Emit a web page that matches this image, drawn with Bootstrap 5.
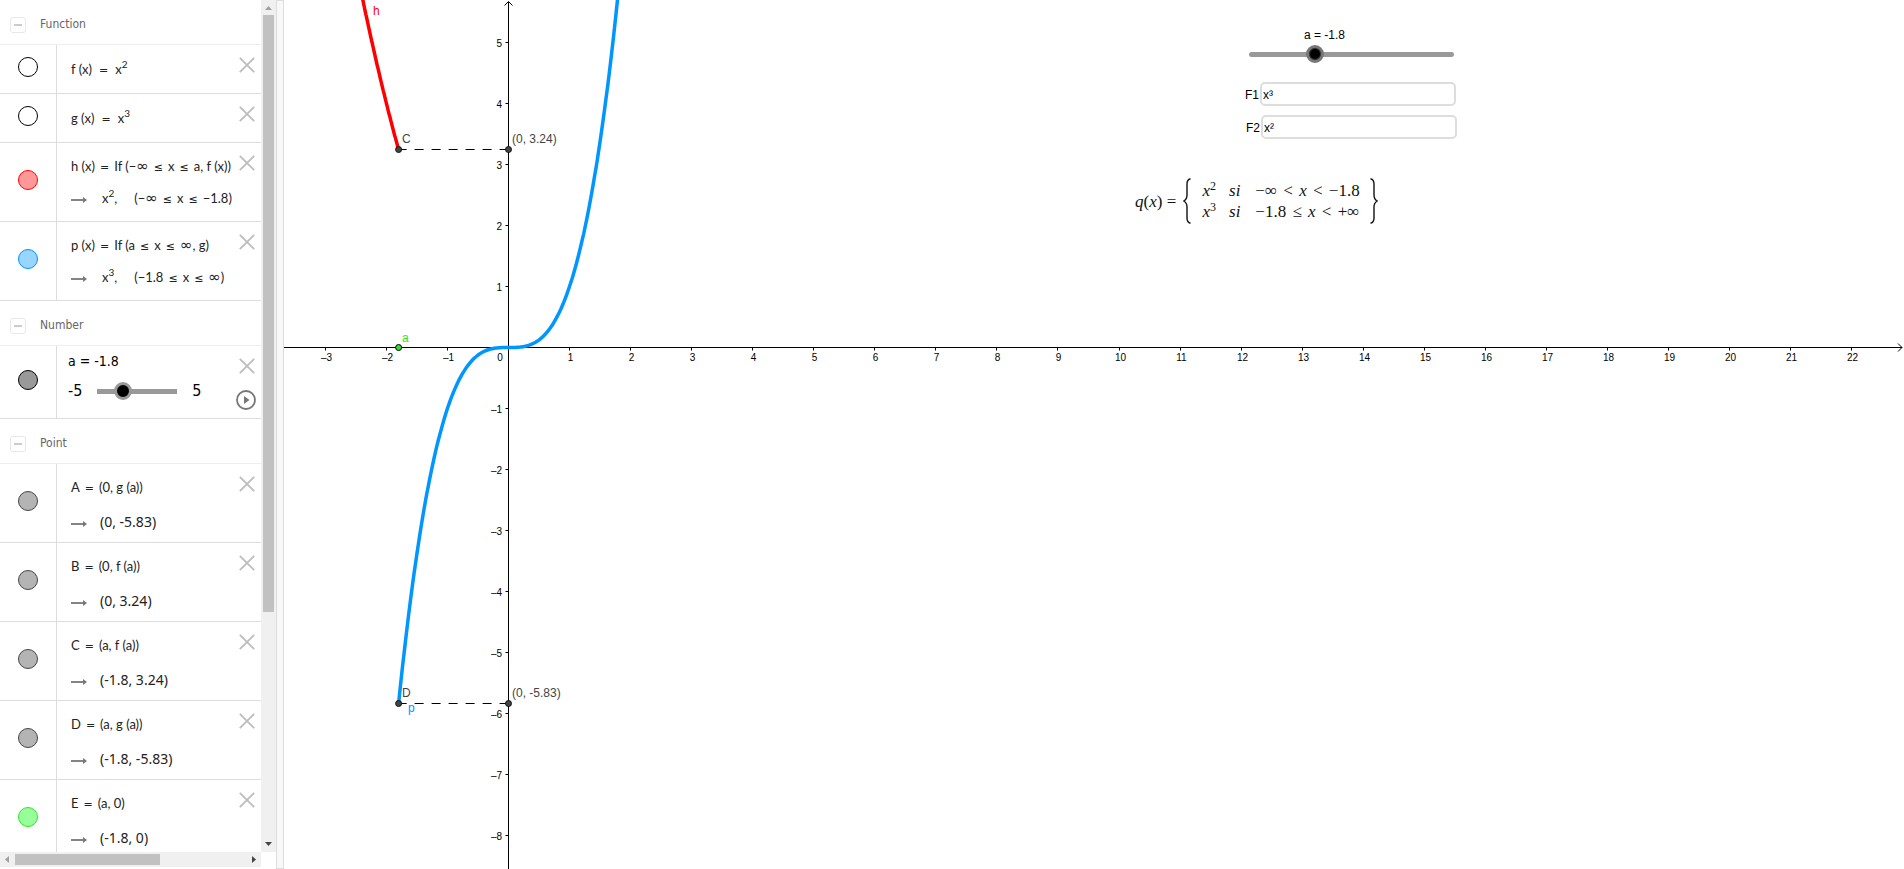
<!DOCTYPE html>
<html lang="en">
<head>
<meta charset="utf-8">
<meta name="viewport" content="width=device-width, initial-scale=1">
<title>Piecewise function</title>
<link href="https://cdn.jsdelivr.net/npm/bootstrap@5.3.0/dist/css/bootstrap.min.css" rel="stylesheet">
<style>
  body { font-family: "Liberation Sans", sans-serif; font-size: 12px; line-height: 16px; color: #000; }
  .side { width: 284px; }
  .view-col { width: 261px; }
  .group-head { height: 45px; border-bottom: 1px solid #eee; padding: 3px 0 0 10px; gap: 14px; font: 12px/18px "DejaVu Sans Condensed", "DejaVu Sans", sans-serif; color: #666; }
  .fold { width: 16px; height: 16px; border: 1px solid #e8e8e8; border-radius: 3px; margin-top: 2px; }
  .fold::before { content: ""; width: 8px; height: 2px; background: #ccc; }
  .entry { border-bottom: 1px solid #ddd; }
  .entry-1 { height: 49px; }
  .entry-2 { height: 79px; }
  .entry-n { height: 73px; }
  .mark-cell { width: 57px; border-right: 1px solid #ddd; padding-bottom: 4px; }
  .dot { width: 20px; height: 20px; border: 1px solid #000; border-radius: 50%; background: #fff; }
  .dot-red { background: #ff9999; border-color: #f00; }
  .dot-blue { background: #99d6ff; border-color: #0091ff; }
  .dot-num { background: #999; }
  .dot-grey { background: #b4b4b4; border-color: #444; }
  .dot-green { background: #99ff99; border-color: #2be62b; }
  .math { font: 13px/20px Lato, sans-serif; color: #222; white-space: pre; padding-left: 14px; }
  .math sup { font-size: 10px; top: -6px; line-height: 0; }
  .entry-1 .math { padding-top: 14px; }
  .entry-2 .math { padding-top: 13px; }
  .math div { height: 20px; }
  .entry-2 .math div + div { margin-top: 12px; }
  .points .math div + div { margin-top: 15px; }
  .math .rel, .math .wide { font: 11px/16px "DejaVu Sans", sans-serif; margin: 0 5px; }
  .math .wide { margin: 0 7px; }
  .math .inf { font: 15px/16px "DejaVu Sans", sans-serif; }
  .math .space { margin-left: 17px; }
  .math .arrow { margin-right: 15px; }
  .math .val { font: 14px/20px "Noto Sans", sans-serif; }
  .points .math .arrow { margin-right: 13px; }
  .del { top: 12px; right: 6px; width: 16px; height: 16px; }
  .play { top: 44px; right: 5px; width: 20px; height: 20px; }
  .num { font: 14px/18px "DejaVu Sans Condensed", "DejaVu Sans", sans-serif; padding: 6px 0 0 11px; }
  .num-line { font-size: 16px; margin-top: 12px; }
  .num-line input { width: 98px; margin: 0 6px; }
  .slide { -webkit-appearance: none; appearance: none; display: block; height: 18px; background: linear-gradient(#999, #999) center / calc(100% - 18px) 5px no-repeat; }
  .slide::-webkit-slider-thumb { -webkit-appearance: none; width: 18px; height: 18px; border-radius: 50%; background: #000; border: 3px solid #999; }
  .slide-big { background: radial-gradient(circle, #999 2px, transparent 3px) 9px center / 5px 5px no-repeat, radial-gradient(circle, #999 2px, transparent 3px) right 9px center / 5px 5px no-repeat, linear-gradient(#999, #999) center / calc(100% - 22px) 5px no-repeat; }
  .slide-big::-webkit-slider-thumb { border-color: #777; box-shadow: inset 0 0 0 1px #333; }
  .bar-v { width: 15px; background: #f0f0f0; }
  .bar-h { height: 15px; background: #f0f0f0; }
  .bar-btn { width: 15px; height: 15px; }
  .tail { height: 2px; }
  .thumb { background: #c1c1c1; }
  .thumb-v { width: 11px; height: 72.6%; }
  .thumb-h { height: 11px; width: 145px; }
  .splitter { width: 8px; background: #f8f8f8; border: 1px solid #ddd; }
  #graph text { font-family: "Liberation Sans", sans-serif; }
  .tick-text { font-size: 10px; }
  .point-text { font-size: 12px; fill: #444; }
  .tool-slider { left: 956px; top: 27px; width: 223px; }
  .tool-slider label { padding-left: 64px; margin-bottom: 2px; }
  .tool-inputs { left: 961px; top: 82px; gap: 9px; }
  .tool-inputs label { margin-right: 1px; padding-top: 1px; }
  .tool-inputs input { width: 196px; height: 24px; border: 2px solid #ddd; border-radius: 5px; padding: 2px 0 0 1px; font: 12px/16px "Liberation Sans", sans-serif; }
  .tool-inputs div + div { margin-left: 1px; }
  .formula { left: 851px; top: 178px; font: italic 17px/21px "Liberation Serif", serif; color: #111; white-space: pre; }
  .formula i.up, .formula sup { font-style: normal; }
  .formula i.rel { font-style: normal; margin: 0 2px; }
  .formula sup { font-size: 12px; top: -6px; line-height: 0; }
  .formula td { padding: 0 15px 0 0; }
  .formula td:first-child { padding-right: 13px; }
  .formula td:last-child { padding-right: 10px; }
  .formula table { margin-left: 11px; }
  .formula .q { margin-right: 3px; }
</style>
</head>
<body class="vh-100 overflow-hidden bg-white">
<svg class="d-none">
  <symbol id="i-x" viewBox="0 0 16 16"><path d="M.8.8l14.4 14.4M15.200.8L.8 15.200" stroke="#bdbdbd" stroke-width="1.800" fill="none"/></symbol>
  <symbol id="i-arrow" viewBox="0 0 16 8"><path d="M0 4h13" stroke="#777" stroke-width="1.800"/><path d="M12 1l4 3-4 3z" fill="#777"/></symbol>
  <symbol id="i-play" viewBox="0 0 20 20"><circle cx="10" cy="10" r="9" fill="none" stroke="#777" stroke-width="1.800"/><path d="M8 6l5.500 4L8 14z" fill="#777"/></symbol>
</svg>
<div class="d-flex h-100">
  <aside class="side d-flex flex-shrink-0">
    <div class="view-col d-flex flex-column flex-shrink-0">
      <div class="flex-fill overflow-hidden">
        <section>
          <header class="group-head d-flex align-items-center"><button class="fold btn p-0 d-flex align-items-center justify-content-center" aria-label="Collapse Function"></button>Function</header>
          <div class="entry entry-1 d-flex position-relative">
            <div class="mark-cell d-flex align-items-center justify-content-center"><span class="dot"></span></div>
            <div class="math"><div>f (x)<span class="wide">=</span>x<sup>2</sup></div></div>
            <button class="del btn p-0 border-0 position-absolute d-flex" aria-label="Delete f"><svg width="16" height="16"><use href="#i-x"/></svg></button>
          </div>
          <div class="entry entry-1 d-flex position-relative">
            <div class="mark-cell d-flex align-items-center justify-content-center"><span class="dot"></span></div>
            <div class="math"><div>g (x)<span class="wide">=</span>x<sup>3</sup></div></div>
            <button class="del btn p-0 border-0 position-absolute d-flex" aria-label="Delete g"><svg width="16" height="16"><use href="#i-x"/></svg></button>
          </div>
          <div class="entry entry-2 d-flex position-relative">
            <div class="mark-cell d-flex align-items-center justify-content-center"><span class="dot dot-red"></span></div>
            <div class="math"><div>h (x)<span class="rel">=</span>If (−<span class="inf">∞</span><span class="rel">≤</span>x<span class="rel">≤</span>a, f (x))</div><div><svg class="arrow" width="16" height="8"><use href="#i-arrow"/></svg>x<sup>2</sup>,<span class="space">(−</span><span class="inf">∞</span><span class="rel">≤</span>x<span class="rel">≤</span>−1.8)</div></div>
            <button class="del btn p-0 border-0 position-absolute d-flex" aria-label="Delete h"><svg width="16" height="16"><use href="#i-x"/></svg></button>
          </div>
          <div class="entry entry-2 d-flex position-relative">
            <div class="mark-cell d-flex align-items-center justify-content-center"><span class="dot dot-blue"></span></div>
            <div class="math"><div>p (x)<span class="rel">=</span>If (a<span class="rel">≤</span>x<span class="rel">≤</span><span class="inf">∞</span>, g)</div><div><svg class="arrow" width="16" height="8"><use href="#i-arrow"/></svg>x<sup>3</sup>,<span class="space">(−1.8</span><span class="rel">≤</span>x<span class="rel">≤</span><span class="inf">∞</span>)</div></div>
            <button class="del btn p-0 border-0 position-absolute d-flex" aria-label="Delete p"><svg width="16" height="16"><use href="#i-x"/></svg></button>
          </div>
        </section>
        <section>
          <header class="group-head d-flex align-items-center"><button class="fold btn p-0 d-flex align-items-center justify-content-center" aria-label="Collapse Number"></button>Number</header>
          <div class="entry entry-n d-flex position-relative">
            <div class="mark-cell d-flex align-items-center justify-content-center"><span class="dot dot-num"></span></div>
            <div class="num"><label for="a-side" class="d-block">a = -1.8</label>
              <div class="num-line d-flex align-items-center">-5<input id="a-side" class="slide" type="range" min="-5" max="5" step="0.1" value="-1.8">5</div></div>
            <button class="del btn p-0 border-0 position-absolute d-flex" aria-label="Delete a"><svg width="16" height="16"><use href="#i-x"/></svg></button>
            <button class="play btn p-0 border-0 position-absolute d-flex" aria-label="Play"><svg width="20" height="20"><use href="#i-play"/></svg></button>
          </div>
        </section>
        <section class="points">
          <header class="group-head d-flex align-items-center"><button class="fold btn p-0 d-flex align-items-center justify-content-center" aria-label="Collapse Point"></button>Point</header>
          <div class="entry entry-2 d-flex position-relative">
            <div class="mark-cell d-flex align-items-center justify-content-center"><span class="dot dot-grey"></span></div>
            <div class="math"><div>A<span class="rel">=</span>(0, g (a))</div><div><svg class="arrow" width="16" height="8"><use href="#i-arrow"/></svg><span class="val">(0, -5.83)</span></div></div>
            <button class="del btn p-0 border-0 position-absolute d-flex" aria-label="Delete A"><svg width="16" height="16"><use href="#i-x"/></svg></button>
          </div>
          <div class="entry entry-2 d-flex position-relative">
            <div class="mark-cell d-flex align-items-center justify-content-center"><span class="dot dot-grey"></span></div>
            <div class="math"><div>B<span class="rel">=</span>(0, f (a))</div><div><svg class="arrow" width="16" height="8"><use href="#i-arrow"/></svg><span class="val">(0, 3.24)</span></div></div>
            <button class="del btn p-0 border-0 position-absolute d-flex" aria-label="Delete B"><svg width="16" height="16"><use href="#i-x"/></svg></button>
          </div>
          <div class="entry entry-2 d-flex position-relative">
            <div class="mark-cell d-flex align-items-center justify-content-center"><span class="dot dot-grey"></span></div>
            <div class="math"><div>C<span class="rel">=</span>(a, f (a))</div><div><svg class="arrow" width="16" height="8"><use href="#i-arrow"/></svg><span class="val">(-1.8, 3.24)</span></div></div>
            <button class="del btn p-0 border-0 position-absolute d-flex" aria-label="Delete C"><svg width="16" height="16"><use href="#i-x"/></svg></button>
          </div>
          <div class="entry entry-2 d-flex position-relative">
            <div class="mark-cell d-flex align-items-center justify-content-center"><span class="dot dot-grey"></span></div>
            <div class="math"><div>D<span class="rel">=</span>(a, g (a))</div><div><svg class="arrow" width="16" height="8"><use href="#i-arrow"/></svg><span class="val">(-1.8, -5.83)</span></div></div>
            <button class="del btn p-0 border-0 position-absolute d-flex" aria-label="Delete D"><svg width="16" height="16"><use href="#i-x"/></svg></button>
          </div>
          <div class="entry entry-2 d-flex position-relative">
            <div class="mark-cell d-flex align-items-center justify-content-center"><span class="dot dot-green"></span></div>
            <div class="math"><div>E<span class="rel">=</span>(a, 0)</div><div><svg class="arrow" width="16" height="8"><use href="#i-arrow"/></svg><span class="val">(-1.8, 0)</span></div></div>
            <button class="del btn p-0 border-0 position-absolute d-flex" aria-label="Delete E"><svg width="16" height="16"><use href="#i-x"/></svg></button>
          </div>
        </section>
      </div>
      <div class="bar-h d-flex align-items-center flex-shrink-0">
        <svg class="bar-btn" viewBox="0 0 15 15"><path d="M9 4v7L5 7.500z" fill="#a0a0a0"/></svg>
        <div class="thumb thumb-h"></div>
        <svg class="bar-btn ms-auto" viewBox="0 0 15 15"><path d="M6 4v7l4-3.500z" fill="#444"/></svg>
      </div>
      <div class="tail flex-shrink-0"></div>
    </div>
    <div class="d-flex flex-column">
      <div class="bar-v d-flex flex-column align-items-center flex-fill">
        <svg class="bar-btn flex-shrink-0" viewBox="0 0 15 15"><path d="M4 10h7L7.500 6z" fill="#a0a0a0"/></svg>
        <div class="flex-fill"><div class="thumb thumb-v"></div></div>
        <svg class="bar-btn flex-shrink-0" viewBox="0 0 15 15"><path d="M4 5h7l-3.500 4z" fill="#444"/></svg>
      </div>
      <div class="bar-btn flex-shrink-0"></div>
      <div class="tail flex-shrink-0"></div>
    </div>
    <div class="splitter"></div>
  </aside>
  <main class="flex-fill position-relative overflow-hidden">
    <svg id="graph" class="d-block w-100 h-100"></svg>
    <div class="tool-slider position-absolute">
      <label for="a-main" class="d-block">a = -1.8</label>
      <input id="a-main" class="slide slide-big w-100" type="range" min="-5" max="5" step="0.1" value="-1.8">
    </div>
    <div class="tool-inputs position-absolute d-flex flex-column">
      <div class="d-flex align-items-center"><label for="f1">F1</label><input id="f1" type="text" value="x³"></div>
      <div class="d-flex align-items-center"><label for="f2">F2</label><input id="f2" type="text" value="x²"></div>
    </div>
    <div class="formula position-absolute d-flex align-items-center">
      <span class="q">q<i class="up">(</i>x<i class="up">) = </i></span>
      <svg width="8" height="46" viewBox="0 0 8 46"><path d="M7.500.8C4.500 1.500 4 3 4 6v11c0 3-.5 4.500-3.200 6C3.500 24.500 4 26 4 29v11c0 3 .5 4.500 3.500 5.200" fill="none" stroke="#111" stroke-width="1.400"/></svg>
      <table>
        <tr><td>x<sup>2</sup></td><td>si</td><td><i class="up">−∞ </i><i class="rel">&lt;</i> x <i class="rel">&lt;</i><i class="up"> −1.8</i></td></tr>
        <tr><td>x<sup>3</sup></td><td>si</td><td><i class="up">−1.8 </i><i class="rel">≤</i> x <i class="rel">&lt;</i><i class="up"> +∞</i></td></tr>
      </table>
      <svg width="8" height="46" viewBox="0 0 8 46"><path d="M.5.8C3.500 1.500 4 3 4 6v11c0 3 .5 4.500 3.200 6C4.500 24.500 4 26 4 29v11c0 3-.5 4.500-3.500 5.200" fill="none" stroke="#111" stroke-width="1.400"/></svg>
    </div>
  </main>
</div>
<script src="https://cdn.jsdelivr.net/npm/bootstrap@5.3.0/dist/js/bootstrap.bundle.min.js"></script>
<script>
  const svg = document.getElementById('graph');
  const unit = 61.05, ox = 224.5, oy = 347.5, a = -1.8;
  const X = x => ox + x * unit, Y = y => oy - y * unit;

  function curve(f, from, to) {
    const pts = [];
    for (let i = 0; i <= 160; i++) {
      const x = from + (to - from) * i / 160;
      pts.push(X(x).toFixed(1) + ',' + Y(f(x)).toFixed(1));
    }
    return pts.join(' ');
  }

  function draw() {
    const w = svg.clientWidth, h = svg.clientHeight;
    let s = '';
    const line = (x1, y1, x2, y2, extra = '') =>
      s += `<path d="M${x1} ${y1}L${x2} ${y2}" stroke="#000" fill="none" ${extra}/>`;
    const text = (x, y, str, cls, extra = '') =>
      s += `<text x="${x}" y="${y}" class="${cls}" ${extra}>${str}</text>`;
    const label = n => n < 0 ? '–' + -n : '' + n;

    line(0, oy, w - 2, oy);
    line(ox, 2, ox, h);
    s += `<path d="M${w - 6} ${oy - 4}l4 4-4 4M${ox - 4} 5.500l4-4 4 4" fill="none" stroke="#000"/>`;
    for (let n = Math.ceil(-ox / unit); X(n) < w - 40; n++) {
      if (!n) continue;
      const x = Math.floor(X(n)) + .5;
      line(x, oy, x, oy + 3);
      text(x + 1, 361, label(n), 'tick-text', 'text-anchor="middle"');
    }
    text(216, 361, '0', 'tick-text', 'text-anchor="middle"');
    for (let n = 5; Y(n) < h; n--) {
      if (!n) continue;
      const y = Math.floor(Y(n)) + .5;
      line(ox - 3, y, ox, y);
      text(218, y + 4, label(n), 'tick-text', 'text-anchor="end"');
    }
    s += `<polyline points="${curve(x => x * x, -2.6, a)}" fill="none" stroke="#f00" stroke-width="3.500"/>`;
    s += `<polyline points="${curve(x => x * x * x, a, 1.9)}" fill="none" stroke="#0096ff" stroke-width="3.500"/>`;
    for (const y of [a * a, a * a * a]) {
      const py = Math.floor(Y(y)) + .5;
      line(X(a), py, ox, py, 'stroke-dasharray="9 8" stroke-dashoffset="1"');
      for (const x of [X(a), ox])
        s += `<circle cx="${x}" cy="${py}" r="3" fill="#444" stroke="#111"/>`;
    }
    s += `<circle cx="${X(a)}" cy="${oy}" r="3" fill="#2be62b" stroke="#000"/>`;
    text(118, 143, 'C', 'point-text');
    text(228, 143, '(0, 3.24)', 'point-text');
    text(118, 697, 'D', 'point-text');
    text(228, 697, '(0, -5.83)', 'point-text');
    text(89, 15, 'h', 'point-text', 'style="fill:#f00"');
    text(118, 342, 'a', 'point-text', 'style="fill:#2be62b"');
    text(124, 712, 'p', 'point-text', 'style="fill:#0096ff"');
    svg.innerHTML = s;
  }
  draw();
  addEventListener('resize', draw);
</script>
</body>
</html>
